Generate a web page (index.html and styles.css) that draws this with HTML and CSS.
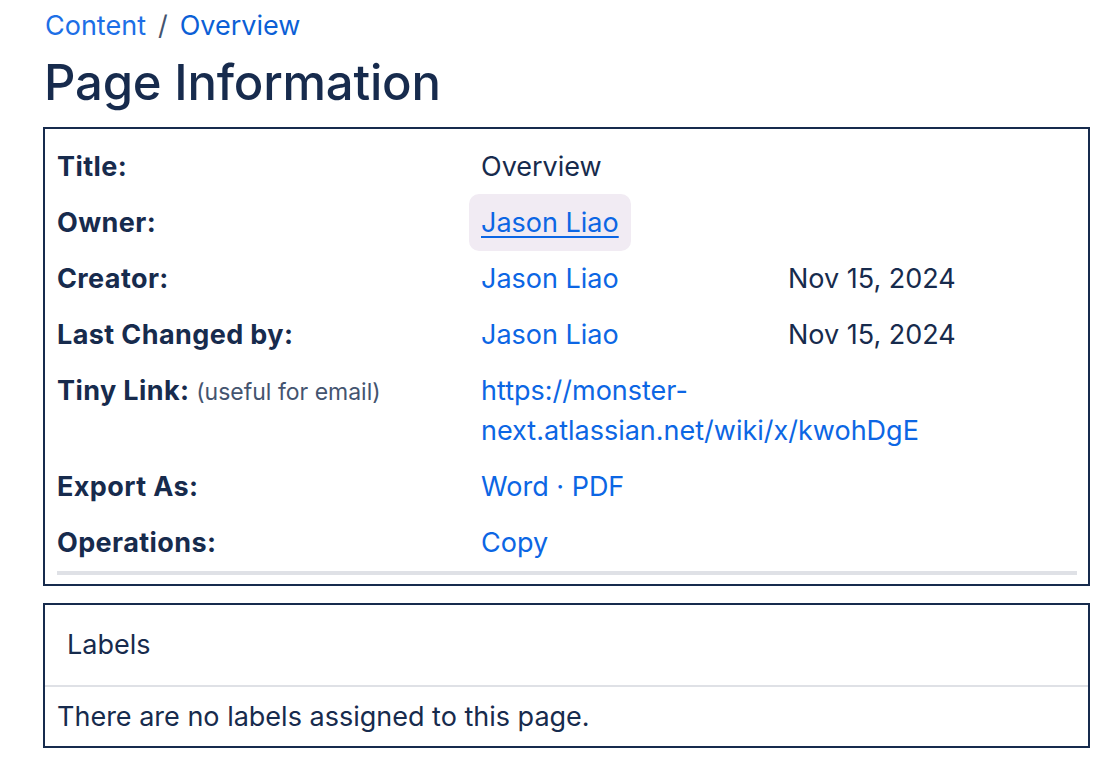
FILE: index.html
```html
<!DOCTYPE html>
<html>
<head>
<meta charset="utf-8">
<link rel="stylesheet" href="styles.css">
</head>
<body>
<div class="page">
  <nav class="crumbs"><a class="crumb-a" href="#">Content</a><span class="sep">/</span><a class="crumb-b" href="#">Overview</a></nav>
  <h1 class="title">Page Information</h1>
  <div class="info-box">
    <table class="info">
      <tr><th>Title:</th><td colspan="2">Overview</td></tr>
      <tr><th>Owner:</th><td colspan="2"><span class="owner"><a class="link ul" href="#">Jason Liao</a></span></td></tr>
      <tr><th>Creator:</th><td class="c2"><a class="link" href="#">Jason Liao</a></td><td>Nov 15, 2024</td></tr>
      <tr><th>Last Changed by:</th><td class="c2"><a class="link" href="#">Jason Liao</a></td><td>Nov 15, 2024</td></tr>
      <tr><th>Tiny Link: <span class="hint">(useful for email)</span></th><td colspan="2"><a class="link" href="#">https://monster-<br>next.atlassian.net/wiki/x/kwohDgE</a></td></tr>
      <tr><th>Export As:</th><td colspan="2"><a class="link" href="#">Word</a> <span class="dot">·</span> <a class="link" href="#">PDF</a></td></tr>
      <tr><th>Operations:</th><td colspan="2"><a class="link" href="#">Copy</a></td></tr>
    </table>
    <div class="bar"></div>
  </div>
  <div class="labels-box">
    <div class="labels-head">Labels</div>
    <div class="labels-body">There are no labels assigned to this page.</div>
  </div>
</div>
</body>
</html>
```
FILE: styles.css
```css
* { box-sizing: border-box; }
body {
  margin: 0;
  font-family: Inter, "Noto Sans", sans-serif;
  color: #172B4D;
  background: #fff;
}
.page { padding: 8px 10px 0 43px; width: 1100px; }
.crumbs { font-size: 27px; line-height: 36px; padding-left: 2px; }
.crumbs a { text-decoration: none; }
.crumb-a { color: #1D6FE6; }
.crumb-b { color: #0C5FD6; }
.sep { color: #44546F; margin: 0 12px; }
.title {
  margin: 10px 0 0 0;
  font-size: 49px;
  font-weight: 500;
  line-height: 58px;
  letter-spacing: -0.2px;
  padding-left: 1px;
  color: #172B4D;
}
.info-box {
  margin-top: 15px;
  width: 1047px;
  border: 2px solid #172B4D;
  padding: 10px 11px 9px 12px;
}
.info { border-collapse: collapse; width: 100%; font-size: 27px; }
.info th {
  text-align: left;
  font-weight: 700;
  width: 424px;
  padding: 8px 0;
  line-height: 40px;
  vertical-align: top;
  letter-spacing: 0.4px;
  white-space: nowrap;
}
.info td { padding: 8px 0; line-height: 40px; vertical-align: top; }
.info td.c2 { width: 307px; }
.hint { font-weight: 400; font-size: 23px; color: #44546F; letter-spacing: 0; }
.link { color: #0C66E4; text-decoration: none; }
.link.ul { text-decoration: underline; text-underline-offset: 4px; text-decoration-thickness: 2px; }
.owner {
  display: inline-block;
  margin: -9px 0 -8px -12px;
  padding: 9px 12px 8px;
  background: #F1EBF3;
  border-radius: 10px;
}
.dot { color: #0C66E4; }
.bar { height: 4px; background: #DFE1E6; margin-top: 0; }
.labels-box {
  margin-top: 17px;
  width: 1047px;
  border: 2px solid #172B4D;
}
.labels-head {
  height: 82px;
  padding-left: 22px;
  line-height: 80px;
  font-size: 27px;
  border-bottom: 2px solid #DFE1E6;
}
.labels-body {
  height: 59px;
  line-height: 60px;
  padding-left: 12px;
  font-size: 27px;
}
```
